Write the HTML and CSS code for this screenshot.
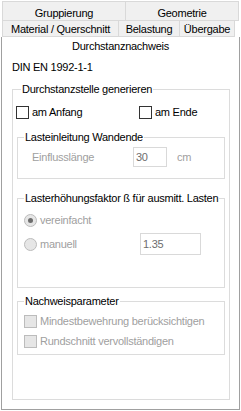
FILE: index.html
```html
<!DOCTYPE html>
<html lang="de">
<head>
    <meta charset="UTF-8">
    <title>Durchstanznachweis</title>
    <link rel="stylesheet" href="styles.css">
</head>
<body>
<div class="tabrow row1">
    <div class="tab t-grp">Gruppierung</div>
    <div class="tab t-geo">Geometrie</div>
</div>
<div class="tabrow row2">
    <div class="tab t-mat">Material / Querschnitt</div>
    <div class="tab t-bel">Belastung</div>
    <div class="tab t-ueb">Übergabe</div>
</div>
<div class="panel">
    <div class="active-tab">Durchstanznachweis</div>
    <div class="norm">DIN EN 1992-1-1</div>

    <fieldset class="grp main">
        <legend>Durchstanzstelle generieren</legend>
        <div class="row checks">
            <label class="opt opt-anfang"><span class="box"></span>am Anfang</label>
            <label class="opt"><span class="box"></span>am Ende</label>
        </div>

        <fieldset class="grp sub g-wand">
            <legend>Lasteinleitung Wandende</legend>
            <div class="row field">
                <span class="lbl off">Einflusslänge</span>
                <span class="txt t-len">30</span>
                <span class="unit off">cm</span>
            </div>
        </fieldset>

        <fieldset class="grp sub g-faktor">
            <legend>Lasterhöhungsfaktor ß für ausmitt. Lasten</legend>
            <div class="row r-radio1">
                <label class="opt off"><span class="radio checked"></span>vereinfacht</label>
            </div>
            <div class="row r-radio2">
                <label class="opt off opt-manuell"><span class="radio"></span>manuell</label>
                <span class="txt t-beta">1.35</span>
            </div>
        </fieldset>

        <fieldset class="grp sub g-nachweis">
            <legend>Nachweisparameter</legend>
            <div class="row r-chk1">
                <label class="opt off"><span class="box dis"></span>Mindestbewehrung berücksichtigen</label>
            </div>
            <div class="row r-chk2">
                <label class="opt off"><span class="box dis"></span>Rundschnitt vervollständigen</label>
            </div>
        </fieldset>
    </fieldset>
</div>
</body>
</html>
```

FILE: styles.css
```css
body {
    margin: 0;
    background: #ffffff;
    font-family: "Liberation Sans", Arial, sans-serif;
    font-size: 11px;
    line-height: 14px;
    letter-spacing: -0.25px;
    color: #000000;
}

/* tab strip */
.tabrow {
    display: flex;
}
.row1 {
    margin: 1px 2px 0 2px;
}
.row2 {
    margin: -1px 6px 0 2px;
}
.tab {
    box-sizing: border-box;
    border: 1px solid #d9d9d9;
    background: #f0f0f0;
    text-align: center;
    white-space: nowrap;
}
.row1 .tab {
    height: 20px;
    padding-top: 4px;
}
.row2 .tab {
    height: 17px;
    padding-top: 1px;
}
.t-grp { width: 124px; }
.t-geo { flex: 1; margin-left: -1px; }
.t-mat { width: 117px; }
.t-bel { width: 62px; margin-left: -1px; }
.t-ueb { flex: 1; margin-left: -1px; }

/* page */
.panel {
    box-sizing: border-box;
    width: 239px;
    height: 373px;
    margin-left: 1px;
    border: 1px solid #a0a0a0;
    border-top: none;
    padding: 0 9px 0 10px;
}
.active-tab {
    height: 20px;
    padding-top: 2px;
    box-sizing: border-box;
    margin: 0 -9px 0 -10px;
    text-align: center;
}
.norm {
    margin-top: 3px;
}

/* group boxes */
.grp {
    margin: 0;
    border: 1px solid #dcdcdc;
    border-radius: 0;
    min-width: 0;
}
.grp legend {
    padding: 0 1px;
    line-height: 14px;
    white-space: nowrap;
}
.main {
    margin-top: 8px;
    padding: 0 4px 44px 3px;
}
.main > legend {
    margin-left: 5px;
}
.sub {
    margin-left: 1px;
    padding: 0 6px 0 6px;
}
.g-wand {
    margin-top: 10px;
    padding-top: 3px;
    padding-bottom: 11px;
}
.g-faktor {
    margin-top: 12px;
    padding-bottom: 32px;
}
.g-nachweis {
    margin-top: 6px;
    padding-bottom: 5px;
}

/* rows */
.row {
    display: flex;
    align-items: center;
}
.checks {
    height: 16px;
    margin-top: 8px;
}
.opt {
    display: flex;
    align-items: center;
    white-space: nowrap;
}
.opt-anfang {
    width: 123px;
}
.field {
    height: 20px;
}
.lbl {
    width: 101px;
    padding-left: 8px;
}
.unit {
    margin-left: 10px;
}
.r-radio1 {
    height: 16px;
    margin-top: 7px;
}
.r-radio2 {
    height: 22px;
    margin-top: 5px;
}
.opt-manuell {
    width: 116px;
}
.r-chk1 {
    height: 16px;
    margin-top: 5px;
}
.r-chk2 {
    height: 16px;
    margin-top: 4px;
}

.off {
    color: #a0a0a0;
}

/* controls */
.box {
    box-sizing: border-box;
    width: 13px;
    height: 13px;
    border: 1px solid #333333;
    background: #ffffff;
    margin-right: 3px;
}
.box.dis {
    border-color: #bcbcbc;
    background: #e6e6e6;
}
.radio {
    box-sizing: border-box;
    width: 13px;
    height: 13px;
    border: 1px solid #bcbcbc;
    border-radius: 50%;
    background: #e6e6e6;
    margin-right: 3px;
    display: flex;
    align-items: center;
    justify-content: center;
}
.radio.checked::after {
    content: "";
    width: 5px;
    height: 5px;
    border-radius: 50%;
    background: #6d6d6d;
}
.txt {
    box-sizing: border-box;
    border: 1px solid #d9d9d9;
    background: #ffffff;
    color: #6d6d6d;
    padding: 2px 0 0 2px;
}
.t-len {
    width: 34px;
    height: 20px;
}
.t-beta {
    width: 61px;
    height: 22px;
    padding-top: 3px;
}
```
